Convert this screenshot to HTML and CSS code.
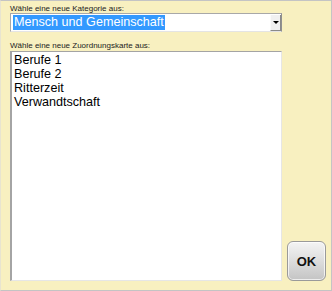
FILE: index.html
```html
<!DOCTYPE html>
<html lang="de">
<head>
    <meta charset="UTF-8">
    <title>Kategorie wählen</title>
    <link rel="stylesheet" href="styles.css">
</head>
<body>
    <div class="dialog">
        <div class="main">
            <div class="caption">Wähle eine neue Kategorie aus:</div>
            <div class="combo">
                <span class="combo-value">Mensch und Gemeinschaft</span>
                <span class="combo-button"><span class="arrow"></span></span>
            </div>

            <div class="caption second">Wähle eine neue Zuordnungskarte aus:</div>
            <div class="listbox">
                <div class="item">Berufe 1</div>
                <div class="item">Berufe 2</div>
                <div class="item">Ritterzeit</div>
                <div class="item">Verwandtschaft</div>
            </div>
        </div>

        <div class="side">
            <button class="ok">OK</button>
        </div>
    </div>
</body>
</html>
```

FILE: styles.css
```css
body {
    margin: 0;
    font-family: "Liberation Sans", Arial, sans-serif;
}

.dialog {
    width: 332px;
    height: 291px;
    box-sizing: border-box;
    background: #f8f0c0;
    border: 1px solid #c4c4c4;
    border-left-color: #e8e4d0;
    display: flex;
    padding: 3px 5px 9px 9px;
}

.main {
    width: 272px;
    display: flex;
    flex-direction: column;
}

.caption {
    font-size: 8px;
    line-height: 9px;
    color: #222;
    height: 9px;
    margin-bottom: 0;
}

.second {
    margin-top: 9px;
}

.combo {
    height: 19px;
    box-sizing: border-box;
    background: white;
    border: 1px solid #a8a8a8;
    border-bottom-color: #e4e4e4;
    border-right-color: #909090;
    display: flex;
    align-items: center;
    padding-left: 2px;
    margin-top: 0;
}

.combo-value {
    flex: 1;
    font-size: 12.6px;
    line-height: 15px;
    color: white;
}

.combo-value {
    flex: none;
    background: #3399ff;
    padding: 0 1px;
}

.combo-button {
    margin-left: auto;
    width: 11px;
    height: 16px;
    box-sizing: border-box;
    background: #f0f0f0;
    border-right: 1px solid #8a8a8a;
    border-bottom: 1px solid #8a8a8a;
    border-left: 1px solid #fafafa;
    display: flex;
    align-items: center;
    justify-content: center;
}

.arrow {
    width: 0;
    height: 0;
    border-left: 3px solid transparent;
    border-right: 3px solid transparent;
    border-top: 3px solid #000;
}

.listbox {
    flex: 1;
    margin-top: 1px;
    background: white;
    border: 1px solid #e6e6e6;
    border-left: 2px solid #a4a4a4;
    border-top: 1px solid #a4a4a4;
    padding: 1px 2px;
}

.item {
    font-size: 12.6px;
    line-height: 14px;
    color: #000;
}

.side {
    flex: 1;
    display: flex;
    align-items: flex-end;
    justify-content: flex-end;
}

.ok {
    width: 39px;
    height: 40px;
    margin-bottom: 0;
    border: 1px solid #9a9a9a;
    border-radius: 6px;
    background: linear-gradient(#f4f4f4, #d8d8d8 60%, #c4c4c4);
    box-shadow: inset 0 0 0 1px rgba(255, 255, 255, 0.7);
    font-family: "Liberation Sans", Arial, sans-serif;
    font-weight: bold;
    font-size: 13px;
    color: #111;
    padding: 0;
}
```
